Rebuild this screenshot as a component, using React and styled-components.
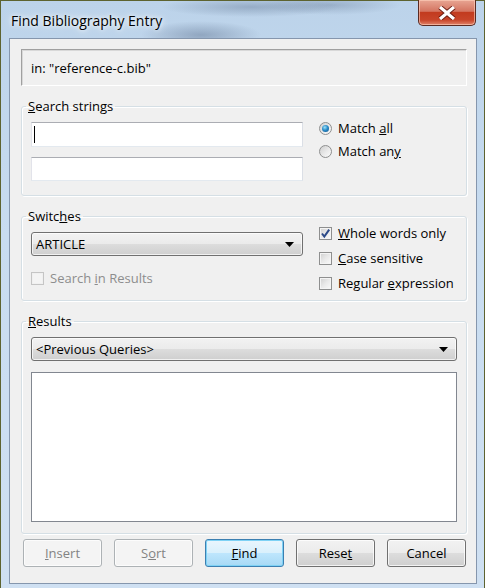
import React from 'react';
import styled, { createGlobalStyle } from "styled-components";

const GlobalStyle = createGlobalStyle`
    html, body {
        margin: 0;
        padding: 0;
        background: #c6d9ee;
    }
    body {
        font-family: "Open Sans", "Liberation Sans", sans-serif;
        font-size: 13px;
        color: #000;
    }
`;

const Key = ({ children }) => <u>{children}</u>;

const ComboArrow = () => (
    <svg width="9" height="5" viewBox="0 0 9 5">
        <path d="M0 0 H9 L4.5 5 Z" fill="#000" />
    </svg>
);

const CheckMark = () => (
    <svg width="11" height="11" viewBox="0 0 11 11">
        <path d="M2 5.5 L4.3 8.5 L9.2 1.6" stroke="#2c4a88" strokeWidth="2" fill="none" />
    </svg>
);

const Check = ({ checked, disabled, children }) => (
    <CheckRow disabled={disabled}>
        <CheckBox disabled={disabled}>{checked && <CheckMark />}</CheckBox>
        <span>{children}</span>
    </CheckRow>
);

const Radio = ({ checked, children }) => (
    <CheckRow>
        <RadioCircle>{checked && <RadioDot />}</RadioCircle>
        <span>{children}</span>
    </CheckRow>
);

export default function App() {
    return (
        <Window>
            <GlobalStyle />
            <TitleBar>
                <Title>Find Bibliography Entry</Title>
                <CloseButton>
                    <svg width="20" height="14" viewBox="0 0 20 14">
                        <path d="M3 1 L10 7 L17 1 M3 13 L10 7 L17 13" stroke="#6b1b10" strokeWidth="5" fill="none" />
                        <path d="M3 1 L10 7 L17 1 M3 13 L10 7 L17 13" stroke="#ffffff" strokeWidth="3.2" fill="none" />
                    </svg>
                </CloseButton>
            </TitleBar>
            <Client>
                <InfoBox>in: "reference-c.bib"</InfoBox>

                <Group pb={14}>
                    <Legend><Key>S</Key>earch strings</Legend>
                    <GroupRow>
                        <LeftCol gap={10}>
                            <TextInput tall><Caret /></TextInput>
                            <TextInput />
                        </LeftCol>
                        <RightCol top={-3} gap={5}>
                            <Radio checked>Match <Key>a</Key>ll</Radio>
                            <Radio>Match an<Key>y</Key></Radio>
                        </RightCol>
                    </GroupRow>
                </Group>

                <Group pb={8}>
                    <Legend>Switc<Key>h</Key>es</Legend>
                    <GroupRow>
                        <LeftCol gap={13}>
                            <Combo>
                                <span>ARTICLE</span>
                                <ComboArrow />
                            </Combo>
                            <Check disabled>Search <Key>i</Key>n Results</Check>
                        </LeftCol>
                        <RightCol top={-8} gap={7}>
                            <Check checked><Key>W</Key>hole words only</Check>
                            <Check><Key>C</Key>ase sensitive</Check>
                            <Check>Regular <Key>e</Key>xpression</Check>
                        </RightCol>
                    </GroupRow>
                </Group>

                <Group pb={11}>
                    <Legend><Key>R</Key>esults</Legend>
                    <LeftCol gap={11} wide>
                        <Combo>
                            <span>&lt;Previous Queries&gt;</span>
                            <ComboArrow />
                        </Combo>
                        <ListBox />
                    </LeftCol>
                </Group>

                <ButtonRow>
                    <Button disabled><Key>I</Key>nsert</Button>
                    <Button disabled>S<Key>o</Key>rt</Button>
                    <Button primary><Key>F</Key>ind</Button>
                    <Button>Rese<Key>t</Key></Button>
                    <Button>Cancel</Button>
                </ButtonRow>
            </Client>
        </Window>
    );
}

const Window = styled.div`
    width: 485px;
    height: 588px;
    box-sizing: border-box;
    display: flex;
    flex-direction: column;
    border-left: 1px solid #5d6330;
    border-top: 1px solid #5d6330;
    border-right: 1px solid #5d6330;
    background:
        radial-gradient(ellipse 60px 14px at 200px 34px, rgba(90, 110, 140, 0.45), transparent),
        radial-gradient(ellipse 90px 10px at 250px 6px, rgba(80, 100, 130, 0.35), transparent),
        radial-gradient(ellipse 70px 10px at 330px 4px, rgba(80, 100, 130, 0.3), transparent),
        linear-gradient(to bottom, #bcd3ea 0%, #c8dcf0 40%, #cfe0f2 100%);
    padding: 0 7px 4px 8px;
`;

const TitleBar = styled.div`
    height: 37px;
    display: flex;
    align-items: flex-start;
    justify-content: space-between;
`;

const Title = styled.div`
    font-family: "Open Sans", "Liberation Sans", sans-serif;
    font-size: 14px;
    color: #000;
    margin-top: 10px;
    margin-left: 2px;
    text-shadow: 0 0 8px #ffffff, 0 0 4px #ffffff;
`;

const CloseButton = styled.div`
    width: 58px;
    height: 26px;
    margin-right: 1px;
    margin-top: -1px;
    box-sizing: border-box;
    border: 1px solid #5a2a22;
    border-top: none;
    border-radius: 0 0 5px 5px;
    background: linear-gradient(to bottom, #e8a593 0%, #d47561 45%, #c23b1f 50%, #c8452a 80%, #e0836a 100%);
    box-shadow: inset 0 0 0 1px rgba(255, 210, 190, 0.6);
    display: flex;
    align-items: center;
    justify-content: center;
`;

const Client = styled.div`
    flex: 1;
    background: #f0f0f0;
    border: 1px solid #8596ad;
    padding: 10px 9px 0 11px;
    display: flex;
    flex-direction: column;
`;

const InfoBox = styled.div`
    height: 37px;
    box-sizing: border-box;
    border: 1px solid #a0a0a0;
    border-right-color: #ffffff;
    border-bottom-color: #ffffff;
    box-shadow: 1px 1px 0 #d8d8d8 inset;
    display: flex;
    align-items: center;
    padding-left: 9px;
`;

const Group = styled.fieldset`
    margin: 12px 0 0 0;
    padding: 8px 9px ${p => p.pb}px 9px;
    border: 1px solid #d5dfe5;
    border-radius: 3px;
    box-shadow: inset 1px 1px 0 #ffffff, 1px 1px 0 #ffffff;
    min-width: 0;
`;

const Legend = styled.legend`
    padding: 0 2px;
    margin-left: -5px;
    line-height: 16px;
`;

const GroupRow = styled.div`
    display: flex;
    align-items: flex-start;
    gap: 16px;
`;

const LeftCol = styled.div`
    display: flex;
    flex-direction: column;
    gap: ${p => p.gap}px;
    flex: 1;
    max-width: ${p => (p.wide ? "none" : "272px")};
`;

const RightCol = styled.div`
    display: flex;
    flex-direction: column;
    gap: ${p => p.gap}px;
    margin-top: ${p => p.top}px;
`;

const TextInput = styled.div`
    height: ${p => (p.tall ? 25 : 24)}px;
    box-sizing: border-box;
    background: #fff;
    border: 1px solid #abadb3;
    border-left-color: #e2e3ea;
    border-right-color: #dbdfe6;
    border-bottom-color: #e3e9ef;
    display: flex;
    align-items: center;
    padding-left: 2px;
`;

const Caret = styled.div`
    width: 1px;
    height: 17px;
    background: #000;
`;

const Combo = styled.div`
    height: 24px;
    box-sizing: border-box;
    border: 1px solid #707070;
    border-radius: 3px;
    background: linear-gradient(to bottom, #f2f2f2 0%, #ebebeb 49%, #dddddd 50%, #cfcfcf 100%);
    box-shadow: inset 0 0 0 1px rgba(255, 255, 255, 0.7);
    display: flex;
    align-items: center;
    justify-content: space-between;
    padding: 0 8px 0 4px;
`;

const ListBox = styled.div`
    height: 150px;
    background: #fff;
    border: 1px solid #828790;
    box-sizing: border-box;
`;

const CheckRow = styled.label`
    display: flex;
    align-items: center;
    gap: 6px;
    height: 18px;
    color: ${p => (p.disabled ? "#8d8d8d" : "#000")};
    white-space: nowrap;
`;

const CheckBox = styled.div`
    width: 13px;
    height: 13px;
    box-sizing: border-box;
    border: 1px solid ${p => (p.disabled ? "#c5c5c5" : "#8e8f8f")};
    background: ${p => (p.disabled
        ? "#f4f4f4"
        : "linear-gradient(135deg, #cfcfcf 0%, #e9e9e9 50%, #fafafa 100%)")};
    box-shadow: inset 0 0 0 1px ${p => (p.disabled ? "#f0f0f0" : "#f4f4f4")};
    display: flex;
    align-items: center;
    justify-content: center;
`;

const RadioCircle = styled.div`
    width: 13px;
    height: 13px;
    box-sizing: border-box;
    border-radius: 50%;
    border: 1px solid #8e8f8f;
    background: linear-gradient(135deg, #cfcfcf 0%, #ececec 60%, #fafafa 100%);
    display: flex;
    align-items: center;
    justify-content: center;
`;

const RadioDot = styled.div`
    width: 7px;
    height: 7px;
    border-radius: 50%;
    background: radial-gradient(circle at 40% 35%, #9ee2f7 0%, #2b8cc9 45%, #0c4f87 100%);
`;

const ButtonRow = styled.div`
    display: flex;
    gap: 12px;
    margin: 5px 0 0 2px;
`;

const Button = styled.div`
    width: 79px;
    height: 28px;
    box-sizing: border-box;
    border-radius: 3px;
    display: flex;
    align-items: center;
    justify-content: center;
    border: 1px solid ${p => (p.disabled ? "#adb2b5" : p.primary ? "#3c7fb1" : "#707070")};
    color: ${p => (p.disabled ? "#838383" : "#000")};
    background: ${p => (p.disabled
        ? "#f4f4f4"
        : p.primary
            ? "linear-gradient(to bottom, #eaf6fd 0%, #d9f0fc 49%, #bee6fd 50%, #a7d9f5 100%)"
            : "linear-gradient(to bottom, #f2f2f2 0%, #ebebeb 49%, #dddddd 50%, #cfcfcf 100%)")};
    box-shadow: inset 0 0 0 1px ${p => (p.primary ? "#7ed2f5" : "rgba(255, 255, 255, 0.75)")};
`;
